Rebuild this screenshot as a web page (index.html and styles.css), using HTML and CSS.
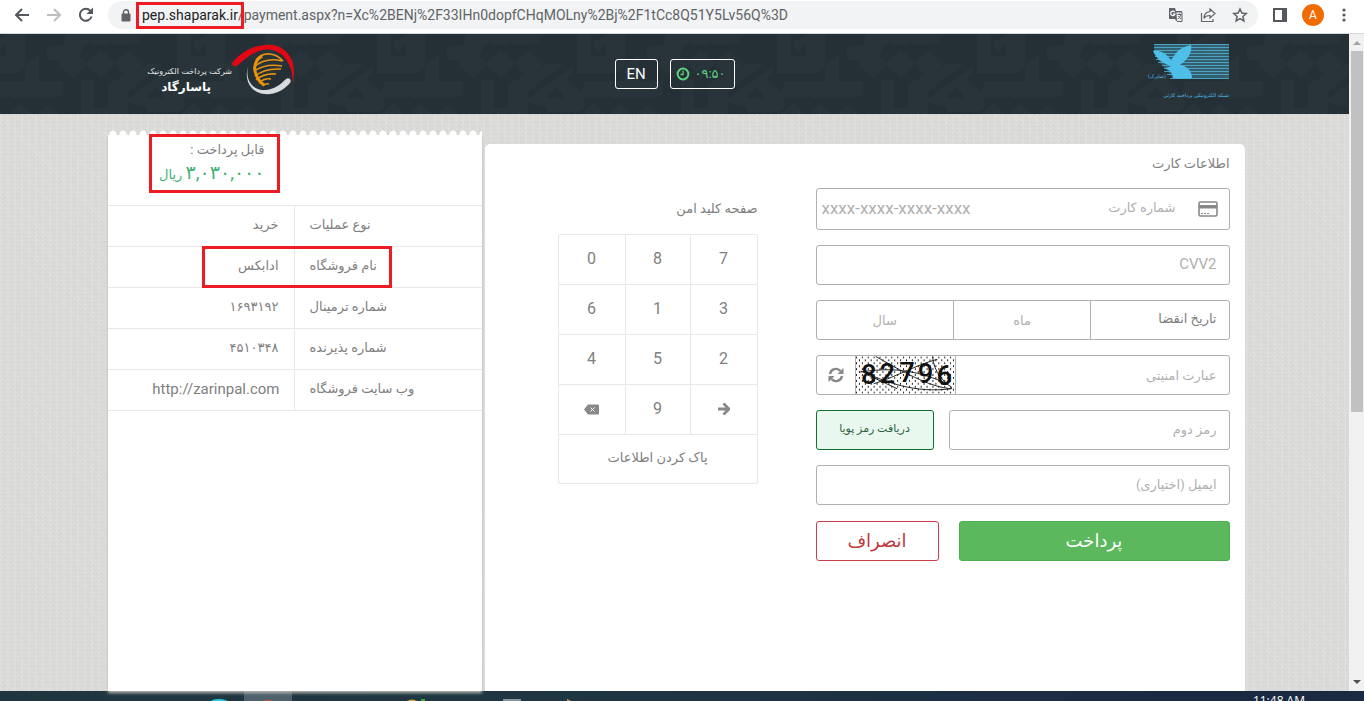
FILE: index.html
```
<!DOCTYPE html>
<html lang="fa">
	<head>
		<title>پرداخت الکترونیک</title>
		<meta charset="utf-8"/>
		<link rel="stylesheet" href="styles.css">
	</head>
	<body>
		<div class="toolbar">
			<button class="tool" aria-label="Back"><svg width="16" height="16" viewBox="0 0 16 16"><path d="M15 8H2M8 2L2 8l6 6" fill="none" stroke="#54585d" stroke-width="2"/></svg></button>
			<button class="tool" aria-label="Forward"><svg width="16" height="16" viewBox="0 0 16 16"><path d="M1 8h13M8 2l6 6-6 6" fill="none" stroke="#bcbec1" stroke-width="2"/></svg></button>
			<button class="tool" aria-label="Reload"><svg width="16" height="16" viewBox="0 0 16 16"><path d="M13.6 9.5A6 6 0 1 1 12.4 3.8" fill="none" stroke="#54585d" stroke-width="2"/><path d="M15 0.5V7H8.5z" fill="#54585d"/></svg></button>
			<div class="address">
				<svg width="10" height="13" viewBox="0 0 10 13"><rect x="0.5" y="4.5" width="9" height="8" rx="1" fill="#5f6368"/><path d="M2.5 5V3.2a2.5 2.5 0 0 1 5 0V5" fill="none" stroke="#5f6368" stroke-width="1.4"/></svg>
				<div class="url"><span class="host">pep.shaparak.ir</span>/payment.aspx?n=Xc%2BENj%2F33IHn0dopfCHqMOLny%2Bj%2F1tCc8Q51Y5Lv56Q%3D<span class="mark markUrl"></span></div>
				<div class="addressIcons">
					<button class="tool" aria-label="Translate"><svg width="16" height="16" viewBox="0 0 16 16"><path d="M1 1h6l1 3h6v10H8l-1-2H1z" fill="#5f6368"/><path d="M8.5 5h5.5v9.5H9" fill="#f1f3f4" stroke="#5f6368"/><path d="M6.8 5.2A2.2 2.2 0 1 0 7 7H5" fill="none" stroke="#fff" stroke-width="1.2"/><path d="M9.5 7.5h4M11.5 6.5v1M12.8 8c-.4 2-1.6 3-3 4M10.3 9l2.7 3" fill="none" stroke="#5f6368"/></svg></button>
					<button class="tool" aria-label="Share"><svg width="16" height="16" viewBox="0 0 16 16"><path d="M1.5 6v8.5H13V12" fill="none" stroke="#5f6368" stroke-width="1.2"/><path d="M10 2l5 4.5-5 4.5V8.5C7 8.5 5 9.5 4 11.5c0-4 2-6.5 6-7z" fill="none" stroke="#5f6368" stroke-width="1.2"/></svg></button>
					<button class="tool" aria-label="Bookmark"><svg width="16" height="16" viewBox="0 0 16 16"><path d="M8 2l1.8 4.1 4.500.4-3.400 3 1 4.400L8 11.600l-3.900 2.300 1-4.400-3.400-3 4.500-.4z" fill="none" stroke="#5f6368" stroke-width="1.5"/></svg></button>
				</div>
			</div>
			<button class="tool" aria-label="Side panel"><svg width="14" height="14" viewBox="0 0 14 14"><rect x="1" y="1" width="12" height="12" fill="#fff" stroke="#54585d" stroke-width="2"/><path d="M9 1h4v12H9z" fill="#54585d"/></svg></button>
			<button class="avatar">A</button>
			<button class="tool dots" aria-label="Menu"><svg width="4" height="14" viewBox="0 0 4 14" fill="#54585d"><circle cx="2" cy="2" r="1.6"/><circle cx="2" cy="7" r="1.6"/><circle cx="2" cy="12" r="1.6"/></svg></button>
		</div>

		<div class="window">
			<div class="page">
				<header>
					<svg class="pattern" width="100%" height="80">
						<defs>
							<!-- one tile of interlocked kufic strokes -->
							<g id="strokes">
								<path d="M0-4h14v26h15V-4h19v30q0 13-13 13H0z"/>
								<path d="M16 10L46-14l4 4L20 17z"/>
								<path d="M70 12h15q6-2 2-16h14q12 30-14 30H70z"/>
								<path d="M104-6h68l-8 10q-5 7-12 7h-18l3-5-7 5h-18l3-5-7 5h-12z"/>
								<path d="M80 30l16-14 14 13 14-13 14 13 14-13 14 14-14 14-14-14-14 14-14-14-14 14z"/>
								<path d="M104 46h13v28h14V50l40-20h14l-34 28v30h-47z"/>
								<path d="M8 47h78v8q0 9-12 9H60l2-5-6 5H34l2-5-6 5H4z"/>
								<path d="M-52 68l48-36v8l-26 20v12z"/>
								<path d="M-30 64h16q4-3-8-12l14-6q32 32 0 32h-22z"/>
								<path d="M48 46V30l14-8v26zM0 84l16-14 14 13 14-13 14 13 14-13 14 14z"/>
							</g>
							<pattern id="kufi" x="177" width="200" height="80" patternUnits="userSpaceOnUse">
								<g class="tile">
									<use href="#strokes"/>
									<use href="#strokes" x="200"/>
									<use href="#strokes" x="-200"/>
								</g>
							</pattern>
						</defs>
						<rect width="100%" height="80" fill="url(#kufi)"/>
					</svg>
					<div class="headerInner">
						<svg class="pasargad" width="160" height="54" viewBox="134 42 160 54">
							<text x="231" y="74" class="logoSmall">شرکت پرداخت الکترونیک</text>
							<text x="210" y="91" class="logoBig">پاسارگاد</text>
							<path d="M232 62c10-12 26-19 40-17 16 3 24 17 20 39 0-18-8-31-21-34-11-2-22 4-34 15-4 3-8 0-5-3z" fill="#e30613"/>
							<path d="M247 66c-3 15 5 25 18 24 9-1 15-6 20-11 3-2 6 1 4 4-7 8-16 12-26 11-14-2-20-14-16-28z" fill="#d9dcde"/>
							<g fill="none" stroke="#e8930c" stroke-width="1.5">
								<path d="M255 60q6-7 14-6 8 1 13 7M254 66q12-9 27-5M253 71q12-8 28-5M254 76q10-8 26-7M255 80q8-7 20-6M258 83q5-5 12-4M262 86q3-3 6-2"/>
								<path d="M261 56q-9 6-7 15t9 14" stroke-width="3"/>
							</g>
						</svg>
						<div class="headerButtons">
							<button class="lang">EN</button>
							<div class="timer">
								<svg width="14" height="14" viewBox="0 0 14 14" fill="none" stroke="#5fcf80" ><circle cx="7" cy="7" r="5.4" stroke-width="2"/><path d="M7 3.5V7.5H4.5" stroke-width="1.3"/></svg>
								<span>۰۹:۵۰</span>
							</div>
						</div>
						<svg class="shaparak" width="90" height="60" viewBox="1140 42 90 60">
							<path d="M1154 44h75v35h-56c-4-9-15-15-19-28z" fill="#4fb5d8" fill-opacity=".35"/>
							<path d="M1154 44.500h75M1154 47.500h75M1154 50.500h75M1154 53.500h75M1155 56.500h74M1156 59.500h73M1158 62.500h71M1162 65.500h67M1164 68.500h65M1164 71.500h65M1167 74.500h62M1170 78.500h59" stroke="#4fb5d8" stroke-opacity=".8"/>
							<path d="M1153 51c9-1 15 4 18 10 4-8 9-14 20-16 2 8-5 16-11 20 7 1 12 6 12 13-6 1-13 1-19 0 0-5-3-8-8-10 3-1 5-1 6-2-8-2-15-8-18-15z" fill="#4dbfe8"/>
							<text x="1166" y="78" class="shapText">(شاپرک)</text>
							<text x="1229" y="97" class="shapText">شبکه الکترونیکی پرداخت کارتی</text>
						</svg>
					</div>
				</header>

				<main dir="rtl">
					<form class="panel" onsubmit="return false">
						<div class="card">
							<h2>اطلاعات کارت</h2>
							<div class="field cardNumber">
								<svg width="20" height="16" viewBox="0 0 20 16"><rect x="1" y="1" width="18" height="14" rx="1.5" fill="none" stroke="#888" stroke-width="1.6"/><path d="M1 4h18v3.500H1z" fill="#888"/><path d="M3 12.500h2M6 12.500h2M9 12.500h2" stroke="#888"/></svg>
								<label for="pan">شماره کارت</label>
								<input id="pan" dir="ltr" placeholder="xxxx-xxxx-xxxx-xxxx">
							</div>
							<input class="field" aria-label="CVV2" placeholder="CVV2">
							<div class="field expiry">
								<label for="month">تاریخ انقضا</label>
								<input id="month" placeholder="ماه">
								<input aria-label="سال" placeholder="سال">
							</div>
							<div class="field captcha">
								<input aria-label="عبارت امنیتی" placeholder="عبارت امنیتی">
								<svg width="101" height="38" viewBox="0 0 101 38">
									<defs>
										<pattern id="dots" width="6" height="6" patternUnits="userSpaceOnUse"><path d="M0 0h1v2H0zM3 3h1v2H3z" fill="#222"/></pattern>
									</defs>
									<rect width="101" height="38" fill="#fff"/>
									<rect width="101" height="38" fill="url(#dots)"/>
									<path d="M5 15C30 26 60 38 97 33M20 0C45 14 75 32 98 33M78 0c2 18 12 26 20 32M4 16c40-6 60 0 90 12M18 28c25-8 45-20 65-25M10 18l32 15" fill="none" stroke="#222" stroke-width="1"/>
									<text x="5 24 44 63 82" y="28 27 26 27 29" class="captchaText">82796</text>
								</svg>
								<button class="refresh" aria-label="Refresh"><svg width="16" height="16" viewBox="0 0 16 16"><path d="M2 7a6 6 0 0 1 10.500-3M14 9a6 6 0 0 1-10.500 3" fill="none" stroke="#888" stroke-width="2.4"/><path d="M15.500 1v6h-6zM.5 15V9h6z" fill="#888"/></svg></button>
							</div>
							<div class="pinRow">
								<input class="field" aria-label="رمز دوم" placeholder="رمز دوم">
								<button class="otp">دریافت رمز پویا</button>
							</div>
							<input class="field" aria-label="ایمیل" placeholder="ایمیل (اختیاری)">
							<div class="actions">
								<button class="pay">پرداخت</button>
								<button class="cancel">انصراف</button>
							</div>
						</div>

						<div class="keypad">
							<h2>صفحه کلید امن</h2>
							<div class="keys">
								<button>7</button><button>8</button><button>0</button>
								<button>3</button><button>1</button><button>6</button>
								<button>2</button><button>5</button><button>4</button>
								<button aria-label="Next"><svg width="12" height="14" viewBox="0 0 12 14"><path d="M0 7h10M5.500 1.500L11 7l-5.500 5.500" fill="none" stroke="#888" stroke-width="2.8"/></svg></button>
								<button>9</button>
								<button aria-label="Backspace"><svg width="15" height="11" viewBox="0 0 15 11"><path d="M0 5.500L4 .5h10q1 0 1 1v8q0 1-1 1H4z" fill="#888"/><path d="M6.500 3.500l4 4M10.500 3.500l-4 4" stroke="#fff"/></svg></button>
								<button class="clear">پاک کردن اطلاعات</button>
							</div>
						</div>
					</form>

					<section class="receipt">
						<div class="amount">
							<div>قابل پرداخت :</div>
							<div class="sum"><strong>۳,۰۳۰,۰۰۰</strong> ریال</div>
							<span class="mark markAmount"></span>
						</div>
						<table>
							<tr><th>نوع عملیات</th><td>خرید</td></tr>
							<tr class="shop"><th>نام فروشگاه</th><td>ادابکس<span class="mark markShop"></span></td></tr>
							<tr><th>شماره ترمینال</th><td>۱۶۹۳۱۹۲</td></tr>
							<tr><th>شماره پذیرنده</th><td>۴۵۱۰۳۴۸</td></tr>
							<tr><th>وب سایت فروشگاه</th><td dir="ltr">http://zarinpal.com</td></tr>
						</table>
					</section>
				</main>
			</div>
			<div class="scrollbar">
				<svg width="15" height="17" viewBox="0 0 15 17"><path d="M4 11l4-4 4 4z" fill="#a3a3a3"/></svg>
				<div class="thumb"></div>
				<svg width="15" height="17" viewBox="0 0 15 17"><path d="M4 6l4 4 4-4z" fill="#505050"/></svg>
			</div>
		</div>

		<div class="taskbar">
			<svg class="apps" width="640" height="10" viewBox="0 0 640 10">
				<path d="M244 0h48v10h-48z" fill="#4f616a"/>
				<ellipse cx="219" cy="12" rx="10" ry="4" fill="#29c5dc"/>
				<ellipse cx="268" cy="12" rx="7" ry="3" fill="#d8483c"/>
				<path d="M407 10q5-3 10 0z" fill="#e6a13c"/>
				<path d="M421 8h4v2h-4z" fill="#3da639"/>
				<path d="M503 8h18v2h-18z" fill="#8e929c"/>
				<path d="M567 8l4 2h-4z" fill="#e59a55"/>
			</svg>
			<time>11:48 AM</time>
		</div>
	</body>
</html>
```
FILE: styles.css
```
* { box-sizing:border-box; }
body {
	margin:0;
	height:100vh;
	display:flex;
	flex-direction:column;
	overflow:hidden;
	color:#808080;
	font:13px/20px Roboto, "DejaVu Sans", sans-serif;
}
button, input { font:inherit; color:inherit; }
button { padding:0; border:0; background:none; }
svg { display:block; flex:none; }
h2 { margin:0; font-size:13px; font-weight:normal; }

/* browser chrome */
.toolbar {
	flex:none;
	display:flex;
	align-items:center;
	gap:16px;
	height:34px;
	padding:0 16px 3px 14px;
	background:#fff;
	border-bottom:1px solid #d5d7da;
}
.tool { display:flex; align-items:center; justify-content:center; min-width:16px; }
.dots { min-width:8px; }
.address {
	flex:1;
	min-width:0;
	display:flex;
	align-items:center;
	gap:11px;
	height:28px;
	margin-right:-2px;
	margin-left:-2px;
	padding:0 10px 0 13px;
	border-radius:14px;
	background:#f1f3f4;
}
.toolbar > .avatar { margin-left:-2px; }
.url {
	position:relative;
	flex:1;
	color:#5f6368;
	font:14px/20px Roboto, sans-serif;
	white-space:nowrap;
}
.host { color:#202124; }
.addressIcons { display:flex; gap:16px; }
.avatar {
	width:22px;
	height:22px;
	border-radius:50%;
	background:#ef6c00;
	color:#fff;
	font-size:12px;
	line-height:22px;
}

/* red frames round the details to check */
.mark { position:absolute; border:3px solid #ed1c24; pointer-events:none; }
.markUrl { left:-6px; top:-3px; width:108px; height:27px; }
.markAmount { left:41px; top:-1px; width:131px; height:59px; }
.markShop { left:94px; top:0; width:190px; height:42px; }

.window { flex:1; min-height:0; display:flex; }
.page {
	flex:1;
	min-width:0;
	display:flex;
	flex-direction:column;
	background-color:#d9d9d7;
	background-image:
		repeating-linear-gradient(45deg, rgba(255,255,255,.12) 0 1px, transparent 1px 3px),
		repeating-linear-gradient(0deg, rgba(120,120,110,.04) 0 1px, transparent 1px 4px),
		repeating-linear-gradient(90deg, rgba(255,255,255,.1) 0 2px, transparent 2px 7px);
}

header { position:relative; flex:none; height:80px; background:#243036; }
.pattern { position:absolute; left:0; top:0; }
.tile { fill:#29343a; }
.tile path { filter:drop-shadow(0 2px 2px #182126); }
.headerInner {
	position:relative;
	display:grid;
	grid-template-columns:1fr auto 1fr;
	align-items:start;
	max-width:1140px;
	margin:0 auto;
	padding:8px 15px 0 30px;
}
.shaparak { justify-self:end; }
.headerButtons { display:flex; gap:12px; margin-top:17px; margin-right:15px; }
.lang, .timer {
	height:30px;
	border:1px solid #fff;
	border-radius:3px;
	color:#fff;
	font-size:15px;
	line-height:28px;
}
.lang { width:43px; }
.timer { display:flex; align-items:center; gap:5px; width:65px; padding-left:5px; color:#5fcf80; font-size:13px; }
.logoSmall { font:8px "DejaVu Sans", sans-serif; fill:#e3e6e8; direction:rtl; }
.logoBig { font:bold 12px "DejaVu Sans", sans-serif; fill:#fff; direction:rtl; }
.shapText { font:5px "DejaVu Sans", sans-serif; fill:#4dbfe8; direction:rtl; }

main {
	flex:1;
	display:grid;
	grid-template-columns:2fr 1fr;
	width:100%;
	max-width:1140px;
	margin:0 auto;
}
.panel {
	display:flex;
	gap:58px;
	margin-top:30px;
	padding:10px 15px;
	background:#fff;
	border-radius:5px 5px 0 0;
}
.card { width:414px; display:flex; flex-direction:column; gap:15px; }
.card h2 { margin-bottom:-1px; }

.field {
	display:flex;
	width:100%;
	height:40px;
	padding:0 12px 2px;
	background:#fff;
	border:1px solid #b0b0b0;
	border-radius:3px;
}
input { min-width:0; border:0; outline:0; background:none; padding:0; font-size:15px; }
input::placeholder { color:#b0b0b0; opacity:1; font-size:13px; }
input[aria-label="CVV2"]::placeholder { font-size:15px; }
.cardNumber { height:42px; align-items:center; padding:0 11px 0 5px; }
.cardNumber label { margin:0 22px; padding-bottom:2px; color:#b0b0b0; }
.cardNumber input { flex:1; }
.cardNumber input::placeholder { font-size:17px; }
.expiry { display:grid; grid-template-columns:repeat(3, 1fr); padding:0; }
.expiry label, .expiry input { line-height:36px; }
.expiry label { padding-right:12px; }
.expiry input { text-align:center; border-right:1px solid #b0b0b0; }
.captcha { padding:0 12px 0 0; }
.captcha input { flex:1; }
.captcha > svg { border-right:1px solid #b0b0b0; border-left:1px solid #b0b0b0; }
.captchaText { font:500 28px Roboto, sans-serif; fill:#111; direction:ltr; }
.refresh { display:flex; align-items:center; justify-content:center; width:38px; }
.pinRow { display:flex; gap:15px; }
.pinRow .field { flex:1; }
.otp {
	width:118px;
	padding-bottom:2px;
	border:1px solid #146c35;
	border-radius:3px;
	background:#e8f8ee;
	color:#2f5f41;
	font-size:11px;
}
.actions { display:flex; gap:20px; padding-top:1px; }
.actions button { height:40px; border-radius:3px; font-size:18px; }
.pay { flex:1; background:#5cb85c; border:1px solid #4cae4c; color:#fff; }
.cancel { width:123px; background:#fff; border:1px solid #c9404b; color:#c0393f; }

.keypad { width:200px; padding-top:45px; }
.keys {
	display:grid;
	grid-template-columns:67px 65px 1fr;
	grid-auto-rows:50px;
	margin-top:15px;
	border:1px solid #e8e8e8;
	border-width:1px 1px 0 0;
	border-radius:3px;
}
.keys button {
	display:flex;
	align-items:center;
	justify-content:center;
	padding-bottom:1px;
	border:1px solid #e8e8e8;
	border-width:0 0 1px 1px;
	font-size:16px;
}
.keys .clear { grid-column:1 / 4; height:49px; padding-bottom:2px; border-radius:0 0 3px 3px; font-size:13px; }

.receipt {
	position:relative;
	margin:21px 3px 0;
	background:#fff;
	box-shadow:0 2px 3px #b8b8b0;
}
/* torn paper edge */
.receipt::before {
	content:"";
	position:absolute;
	left:0;
	right:0;
	top:-5px;
	height:5px;
	background:radial-gradient(ellipse 4px 5px at 5px 5px, #fff 80%, transparent) 0 0 / 10px 5px;
}
.amount {
	position:relative;
	height:70px;
	padding:5px 217px 0 0;
}
.sum { line-height:26px; color:#3fb174; white-space:nowrap; }
.sum strong { font-size:19px; font-weight:normal; }
table { position:relative; width:100%; border-collapse:separate; border-spacing:0; table-layout:fixed; }
th, td {
	height:41px;
	padding:0 15px 2px;
	border-top:1px solid #e8e8e8;
	font-weight:normal;
	text-align:left;
}
td { border-right:1px solid #e8e8e8; text-align:right; }
td[dir] { font-size:15px; }
tr:last-child th, tr:last-child td { border-bottom:1px solid #e8e8e8; height:42px; }
.shop { position:relative; }

.scrollbar {
	flex:none;
	display:flex;
	flex-direction:column;
	justify-content:space-between;
	width:15px;
	background:#f1f1f1;
}
.thumb { flex:0 0 55%; margin:0 1px auto 2px; background:#c1c1c1; }

.taskbar {
	flex:none;
	display:flex;
	justify-content:space-between;
	height:10px;
	overflow:hidden;
	background:linear-gradient(90deg, #20363f, #1f3743 40%, #1b2a43 85%);
}
.taskbar time { margin-right:59px; color:#fff; font:12px/20px "Open Sans", sans-serif; }
```
